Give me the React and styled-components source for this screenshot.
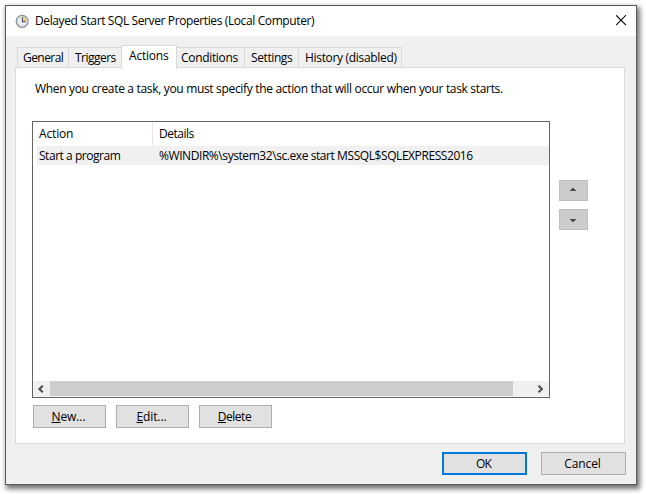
import React from 'react';
import styled, { createGlobalStyle } from 'styled-components';

const Global = createGlobalStyle`
  * { box-sizing: border-box; }
  body { margin: 0; background: #fff; overflow: hidden; }
`;

const Desktop = styled.div`
  width: 646px;
  height: 494px;
  padding: 5px 0 0 5px;
  background: #fff;
  font: 12px/16px "Open Sans", "Noto Sans", sans-serif;
  color: #000;
`;

const Dialog = styled.div`
  width: 632px;
  height: 480px;
  display: flex;
  flex-direction: column;
  background: #f0f0f0;
  border: 1px solid #5a5a5c;
  box-shadow: 2px 3px 5px 1px rgba(0, 0, 0, 0.55);
`;

const TitleBar = styled.header`
  height: 30px;
  flex: none;
  display: flex;
  align-items: flex-start;
  padding: 7px 9px 0 9px;
  background: #fff;
`;

const Label = styled.span`
  display: block;
  white-space: pre;
  letter-spacing: ${(p) => p.$track || 0}px;
`;

const Title = styled(Label)`
  flex: 1;
  margin-left: 6px;
`;

const CloseButton = styled.button`
  width: 11px;
  height: 11px;
  margin-top: 2px;
  padding: 0;
  border: 0;
  background: none;
  display: block;
  svg { display: block; }
`;

const TabStrip = styled.nav`
  height: 32px;
  flex: none;
  display: flex;
  align-items: flex-end;
  padding-left: 11px;
`;

const Tab = styled.div`
  width: ${(p) => p.$width}px;
  height: 21px;
  padding: 2px 0 0 ${(p) => p.$inset}px;
  border: 1px solid #d9d9d9;
  border-left-width: ${(p) => (p.$first ? 1 : 0)}px;
  border-bottom: 0;
  background: #f0f0f0;
`;

const ActiveTab = styled(Tab)`
  height: 24px;
  margin: 0 0 -1px -1px;
  border-left-width: 1px;
  background: #fff;
  z-index: 1;
`;

const Panel = styled.main`
  width: 610px;
  height: 377px;
  flex: none;
  margin-left: 9px;
  margin-top: -1px;
  padding: 13px 0 0 16px;
  border: 1px solid #d9d9d9;
  background: #fff;
`;

const Hint = styled(Label)`
  margin-left: 3px;
  height: 40px;
`;

const Columns = styled.div`
  display: flex;
  gap: 9px;
`;

const ListView = styled.section`
  width: 518px;
  height: 277px;
  display: flex;
  flex-direction: column;
  border: 1px solid #646464;
  background: #fff;
`;

const HeaderRow = styled.div`
  height: 24px;
  display: flex;
  flex: none;
`;

const HeaderCell = styled.div`
  width: ${(p) => p.$width}px;
  padding: 4px 0 0 6px;
  border-right: ${(p) => (p.$divider ? '1px solid #e5e5e5' : '0')};
`;

const Row = styled.div`
  height: 19px;
  flex: none;
  display: flex;
  margin-left: 4px;
  background: #f0f0f0;
`;

const Cell = styled.div`
  width: ${(p) => p.$width}px;
  padding: 2px 0 0 ${(p) => p.$inset}px;
`;

const ScrollBar = styled.div`
  height: 16px;
  margin-top: auto;
  display: flex;
  border-bottom: 1px solid #f8f8f8;
  background: #f0f0f0;
`;

const ScrollArrow = styled.div`
  width: 17px;
  padding-right: 1px;
  display: flex;
  align-items: center;
  justify-content: center;
`;

const Thumb = styled.div`
  width: 463px;
  margin-right: 19px;
  background: #cdcdcd;
`;

const OrderButtons = styled.div`
  display: flex;
  flex-direction: column;
  gap: 8px;
  padding-top: 59px;
`;

const OrderButton = styled.button`
  width: 29px;
  height: 21px;
  padding: 0;
  border: 1px solid #bfbfbf;
  background: #cccccc;
  display: flex;
  align-items: center;
  justify-content: center;
`;

const ButtonRow = styled.div`
  display: flex;
  gap: 10px;
  padding: 7px 0 0 1px;
`;

const Button = styled.button`
  width: ${(p) => p.$width}px;
  height: 23px;
  padding: 0 2px 0 0;
  display: flex;
  align-items: center;
  justify-content: center;
  font: inherit;
  color: inherit;
  background: #e1e1e1;
  border: ${(p) => (p.$default ? '2px solid #0078d7' : '1px solid #adadad')};
`;

const AccessKey = styled.span`
  text-decoration: underline;
  text-decoration-thickness: 1px;
  text-underline-offset: 1px;
  text-decoration-skip-ink: none;
`;

const Footer = styled.footer`
  display: flex;
  justify-content: flex-end;
  gap: 14px;
  padding: 8px 10px 0 0;
`;

const Arrow = ({ down }) => (
  <svg width="7" height="5" viewBox="0 0 7 5" shapeRendering="crispEdges">
    <path
      d={down ? 'M0 2h6v1h-1v1h-1v1h-2v-1h-1v-1h-1z' : 'M2 0h2v1h1v1h1v1h-6v-1h1v-1h1z'}
      fill="#505050"
    />
  </svg>
);

const Chevron = ({ right }) => (
  <svg width="8" height="8" viewBox="0 0 8 8">
    <path
      d={right ? 'M2.5 .7L5.9 4 2.5 7.3' : 'M5.8 .7L2.4 4 5.8 7.3'}
      fill="none"
      stroke="#505050"
      strokeWidth="2.1"
    />
  </svg>
);

const ClockIcon = () => (
  <svg width="14" height="16" viewBox="0 0 14 16">
    <circle cx="7.2" cy="8.3" r="6" fill="#e9eef2" stroke="#8c9093" strokeWidth="1.2" />
    <circle cx="7.2" cy="8.3" r="4.9" fill="none" stroke="#bdd0de" strokeWidth=".9" />
    <path d="M7.2 8.3V3.5A4.8 4.8 0 0 1 12 8.3z" fill="#f1c67a" />
    <path d="M7.4 4.2V8.6H10.6" fill="none" stroke="#4d5866" strokeWidth="1.1" />
  </svg>
);

const tabs = [
  { name: 'General', width: 52, inset: 5, track: -0.56, first: true },
  { name: 'Triggers', width: 53, inset: 6, track: -0.52 },
  { name: 'Actions', width: 56, inset: 7, track: -0.2, active: true },
  { name: 'Conditions', width: 68, inset: 4, track: -0.32 },
  { name: 'Settings', width: 54, inset: 6, track: -0.4 },
  { name: 'History (disabled)', width: 103, inset: 6, track: -0.32 },
];

const actionButtons = [
  { name: 'New...', track: -0.1 },
  { name: 'Edit...', track: -0.12 },
  { name: 'Delete', track: -0.48 },
];

export default function App() {
  return (
    <>
      <Global />
      <Desktop>
        <Dialog>
          <TitleBar>
            <ClockIcon />
            <Title $track={-0.386}>Delayed Start SQL Server Properties (Local Computer)</Title>
            <CloseButton aria-label="Close">
              <svg width="11" height="11" viewBox="0 0 11 11">
                <path d="M0 .2l10 10M10 .2l-10 10" stroke="#000" strokeWidth="1.1" />
              </svg>
            </CloseButton>
          </TitleBar>
          <TabStrip>
            {tabs.map((t) => {
              const Part = t.active ? ActiveTab : Tab;
              return (
                <Part key={t.name} $width={t.width} $inset={t.inset} $first={t.first}>
                  <Label $track={t.track}>{t.name}</Label>
                </Part>
              );
            })}
          </TabStrip>
          <Panel>
            <Hint $track={-0.325}>
              When you create a task, you must specify the action that will occur when your task starts.
            </Hint>
            <Columns>
              <ListView>
                <HeaderRow>
                  <HeaderCell $width={120} $divider>
                    <Label $track={-0.15}>Action</Label>
                  </HeaderCell>
                  <HeaderCell $width={396}>
                    <Label $track={-0.48}>Details</Label>
                  </HeaderCell>
                </HeaderRow>
                <Row>
                  <Cell $width={116} $inset={2}>
                    <Label $track={-0.46}>Start a program</Label>
                  </Cell>
                  <Cell $width={396} $inset={6}>
                    <Label $track={-0.426}>{'%WINDIR%\\system32\\sc.exe start MSSQL$SQLEXPRESS2016'}</Label>
                  </Cell>
                </Row>
                <ScrollBar>
                  <ScrollArrow><Chevron /></ScrollArrow>
                  <Thumb />
                  <ScrollArrow><Chevron right /></ScrollArrow>
                </ScrollBar>
              </ListView>
              <OrderButtons>
                <OrderButton aria-label="Move up"><Arrow /></OrderButton>
                <OrderButton aria-label="Move down"><Arrow down /></OrderButton>
              </OrderButtons>
            </Columns>
            <ButtonRow>
              {actionButtons.map((b) => (
                <Button key={b.name} $width={73}>
                  <Label $track={b.track}>
                    <AccessKey>{b.name[0]}</AccessKey>
                    {b.name.slice(1)}
                  </Label>
                </Button>
              ))}
            </ButtonRow>
          </Panel>
          <Footer>
            <Button $width={85} $default><Label $track={-0.8}>OK</Label></Button>
            <Button $width={85}><Label $track={-0.1}>Cancel</Label></Button>
          </Footer>
        </Dialog>
      </Desktop>
    </>
  );
}
